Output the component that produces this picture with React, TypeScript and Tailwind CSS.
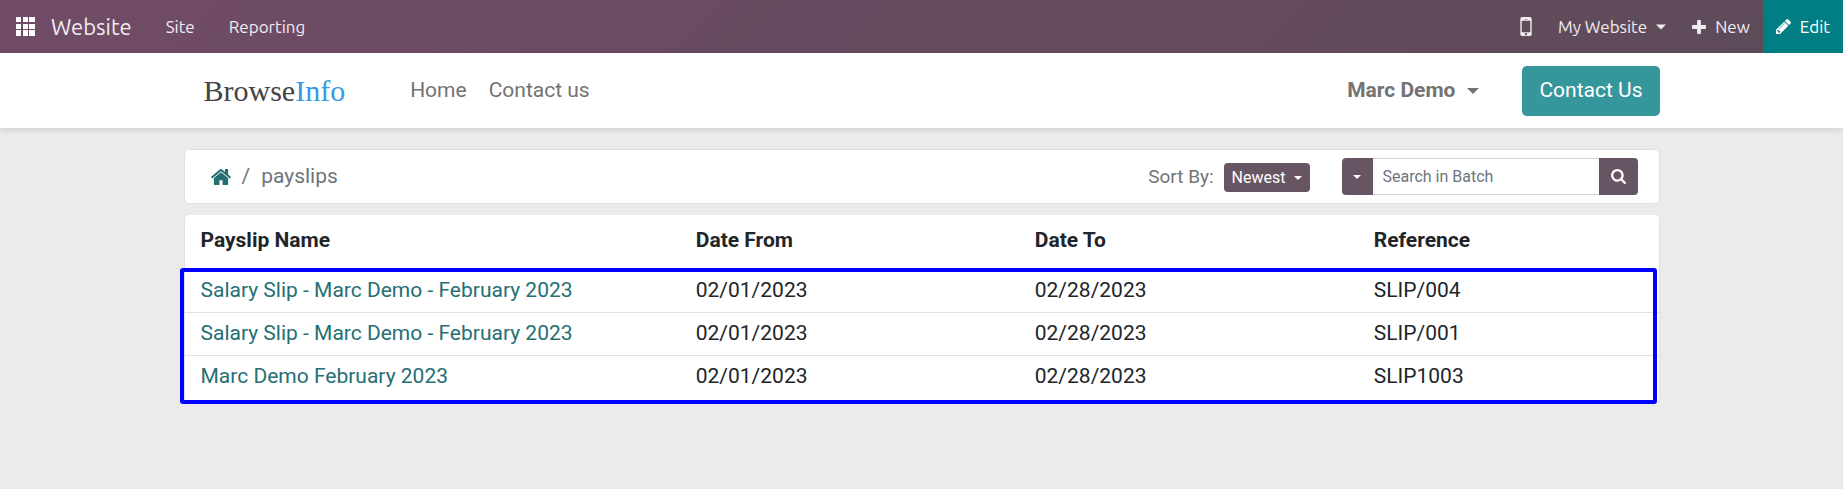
import React from "react";

type Payslip = { name: string; from: string; to: string; reference: string };

const payslips: Payslip[] = [
  { name: "Salary Slip - Marc Demo - February 2023", from: "02/01/2023", to: "02/28/2023", reference: "SLIP/004" },
  { name: "Salary Slip - Marc Demo - February 2023", from: "02/01/2023", to: "02/28/2023", reference: "SLIP/001" },
  { name: "Marc Demo February 2023", from: "02/01/2023", to: "02/28/2023", reference: "SLIP1003" },
];

type IconProps = { className: string };

function Caret({ className }: IconProps) {
  return (
    <svg viewBox="0 0 12 6" className={className} fill="currentColor" aria-hidden="true">
      <path d="M0 0h12L6 6z" />
    </svg>
  );
}

function AppsIcon({ className }: IconProps) {
  return (
    <svg viewBox="0 0 19 19" className={className} fill="currentColor" aria-hidden="true">
      <path d="M0 0h5v5H0zM7 0h5v5H7zM13 0h6v5h-6zM0 7h5v5H0zM7 7h5v5H7zM13 7h6v5h-6zM0 13h5v6H0zM7 13h5v6H7zM13 13h6v6h-6z" />
    </svg>
  );
}

function MobileIcon({ className }: IconProps) {
  return (
    <svg viewBox="512 256 768 1280" className={className} fill="currentColor" aria-hidden="true">
      <path d="M976 1408q0-33-23.5-56.5t-56.5-23.5-56.5 23.5-23.5 56.5 23.5 56.5 56.5 23.5 56.5-23.5 23.5-56.5zm208-160v-704q0-13-9.5-22.5t-22.5-9.5h-512q-13 0-22.5 9.5t-9.5 22.5v704q0 13 9.5 22.5t22.5 9.5h512q13 0 22.5-9.5t9.5-22.5zm-192-848q0-16-16-16h-160q-16 0-16 16t16 16h160q16 0 16-16zm288-16v1024q0 52-38 90t-90 38h-512q-52 0-90-38t-38-90v-1024q0-52 38-90t90-38h512q52 0 90 38t38 90z" />
    </svg>
  );
}

function PlusIcon({ className }: IconProps) {
  return (
    <svg viewBox="192 128 1408 1408" className={className} fill="currentColor" aria-hidden="true">
      <path d="M1600 736v192q0 40-28 68t-68 28h-416v416q0 40-28 68t-68 28h-192q-40 0-68-28t-28-68v-416h-416q-40 0-68-28t-28-68v-192q0-40 28-68t68-28h416v-416q0-40 28-68t68-28h192q40 0 68 28t28 68v416h416q40 0 68 28t28 68z" />
    </svg>
  );
}

function PencilIcon({ className }: IconProps) {
  return (
    <svg viewBox="128 149 1516 1516" className={className} fill="currentColor" aria-hidden="true">
      <path d="M491 1536l91-91-235-235-91 91v107h128v128h107zm523-928q0-22-22-22-10 0-17 7l-542 542q-7 7-7 17 0 22 22 22 10 0 17-7l542-542q7-7 7-17zm-54-192l416 416-832 832h-416v-416zm683 96q0 53-37 90l-166 166-416-416 166-165q36-38 90-38 53 0 91 38l235 234q37 39 37 91z" />
    </svg>
  );
}

function HomeIcon({ className }: IconProps) {
  return (
    <svg viewBox="88 256 1616 1280" className={className} fill="currentColor" aria-hidden="true">
      <path d="M1472 992v480q0 26-19 45t-45 19h-384v-384h-256v384h-384q-26 0-45-19t-19-45v-480q0-1 .5-3t.5-3l575-474 575 474q1 2 1 6zm223-69l-62 74q-8 9-21 11h-3q-13 0-21-7l-692-577-692 577q-12 8-24 7-13-2-21-11l-62-74q-8-10-7-23.5t11-21.5l719-599q32-26 76-26t76 26l244 204v-195q0-14 9-23t23-9h192q14 0 23 9t9 23v408l219 182q10 8 11 21.5t-7 23.5z" />
    </svg>
  );
}

function SearchIcon({ className }: IconProps) {
  return (
    <svg viewBox="64 128 1664 1664" className={className} fill="currentColor" aria-hidden="true">
      <path d="M1216 832q0-185-131.5-316.5t-316.5-131.5-316.5 131.5-131.5 316.5 131.5 316.5 316.5 131.5 316.5-131.5 131.5-316.5zm512 832q0 52-38 90t-90 38q-54 0-90-38l-343-342q-179 124-399 124-143 0-273.5-55.5t-225-150-150-225-55.5-273.5 55.5-273.5 150-225 225-150 273.5-55.5 273.5 55.5 225 150 150 225 55.5 273.5q0 220-124 399l343 343q37 37 37 90z" />
    </svg>
  );
}

function SystemBar() {
  return (
    <nav className="flex h-[53px] items-stretch justify-between bg-linear-135 from-[#714b67] to-[#5d4b58] font-['Ubuntu','Noto_Sans',sans-serif] text-[17px] text-[#f0ecef]">
      <div className="flex items-center">
        <button type="button" aria-label="Apps" className="mx-4 text-white">
          <AppsIcon className="size-[19px]" />
        </button>
        <a href="#website" className="text-[22px]">Website</a>
        <a href="#site" className="ml-[34px]">Site</a>
        <a href="#reporting" className="ml-[34px]">Reporting</a>
      </div>
      <div className="flex items-stretch">
        <button type="button" aria-label="Mobile preview" className="px-[13px]">
          <MobileIcon className="h-[19px] w-3" />
        </button>
        <button type="button" className="flex items-center gap-[9px] px-[13px]">
          My Website
          <Caret className="h-[6px] w-[10px]" />
        </button>
        <button type="button" className="flex items-center gap-[9px] px-[13px]">
          <PlusIcon className="size-[14px]" />
          New
        </button>
        <button type="button" className="flex items-center gap-[9px] bg-[#017e84] px-[13px] text-white">
          <PencilIcon className="size-[15px]" />
          Edit
        </button>
      </div>
    </nav>
  );
}

function SiteHeader() {
  return (
    <header className="bg-white shadow-[0_2px_6px_rgba(0,0,0,0.12)]">
      <div className="mx-auto flex h-[75px] max-w-[1476px] items-center justify-between text-[#737373]">
        <div className="flex items-center">
          <a href="#home" className="ml-5 font-['Liberation_Serif',serif] text-[30px] text-[#444]">
            Browse<span className="text-[#3499e6]">Info</span>
          </a>
          <a href="#home" className="ml-[65px]">Home</a>
          <a href="#contact" className="ml-[22px]">Contact us</a>
        </div>
        <div className="flex items-center">
          <button type="button" className="mr-[43px] flex items-center gap-3 font-bold">
            Marc Demo
            <Caret className="h-[6px] w-3" />
          </button>
          <a href="#contact" className="flex h-[50px] items-center rounded-[5px] bg-[#35979c] px-[17px] text-white">
            Contact Us
          </a>
        </div>
      </div>
    </header>
  );
}

function Toolbar() {
  return (
    <div className="flex h-[55px] items-center justify-between rounded-[5px] border border-[#dee2e6] bg-white pr-[21px] pl-[26px]">
      <div className="flex items-center text-[#6c757d]">
        <a href="#home" aria-label="Home" className="text-[#256f73]">
          <HomeIcon className="h-4 w-5" />
        </a>
        <span className="mx-[11px]">/</span>
        <span>payslips</span>
      </div>
      <div className="flex items-center">
        <div className="mr-8 flex items-center pt-[2px]">
          <span className="mr-[10px] text-[19px] text-[#737373]">Sort By:</span>
          <button type="button" className="flex h-[29px] items-center gap-2 rounded-[4px] bg-[#685563] px-2 text-[16px] text-white">
            Newest
            <Caret className="h-1 w-2" />
          </button>
        </div>
        <form className="flex h-[37px] items-stretch">
          <button type="button" aria-label="Search options" className="flex w-[31px] items-center justify-center rounded-l-[4px] bg-[#685563] text-white">
            <Caret className="h-1 w-2" />
          </button>
          <input
            type="text"
            aria-label="Search in Batch"
            placeholder="Search in Batch"
            className="w-[226px] border-y border-[#ced4da] px-[10px] text-[16px] placeholder:text-[#6c757d] focus:outline-none"
          />
          <button type="submit" aria-label="Search" className="flex w-[39px] items-center justify-center rounded-r-[4px] bg-[#685563] text-white">
            <SearchIcon className="size-[15px]" />
          </button>
        </form>
      </div>
    </div>
  );
}

function PayslipTable() {
  return (
    <div className="relative mt-[11px] rounded-[5px] border-x border-[#dee2e6] bg-white pb-1">
      <table className="w-full table-fixed border-collapse text-left">
        <thead>
          <tr className="h-[54px]">
            <th className="w-[33.6%] px-4 pb-[2px]">Payslip Name</th>
            <th className="w-[23%] px-4 pb-[2px]">Date From</th>
            <th className="w-[23%] px-4 pb-[2px]">Date To</th>
            <th className="px-4 pb-[2px]">Reference</th>
          </tr>
        </thead>
        <tbody className="divide-y divide-[#dee2e6]">
          {payslips.map((slip) => (
            <tr key={slip.reference} className="h-[43px]">
              <td className="px-4">
                <a href={"#" + slip.reference} className="text-[#256f73]">{slip.name}</a>
              </td>
              <td className="px-4">{slip.from}</td>
              <td className="px-4">{slip.to}</td>
              <td className="px-4">{slip.reference}</td>
            </tr>
          ))}
        </tbody>
      </table>
      <div className="pointer-events-none absolute top-[53px] right-[2px] -bottom-[2px] -left-[5px] rounded-[3px] border-4 border-[#0000ff]" />
    </div>
  );
}

export default function App() {
  return (
    <div className="min-h-screen bg-[#ebebeb] font-['Roboto',sans-serif] text-[21px] text-[#212529]">
      <SystemBar />
      <SiteHeader />
      <main className="mx-auto max-w-[1476px] pt-[21px]">
        <Toolbar />
        <PayslipTable />
      </main>
    </div>
  );
}
